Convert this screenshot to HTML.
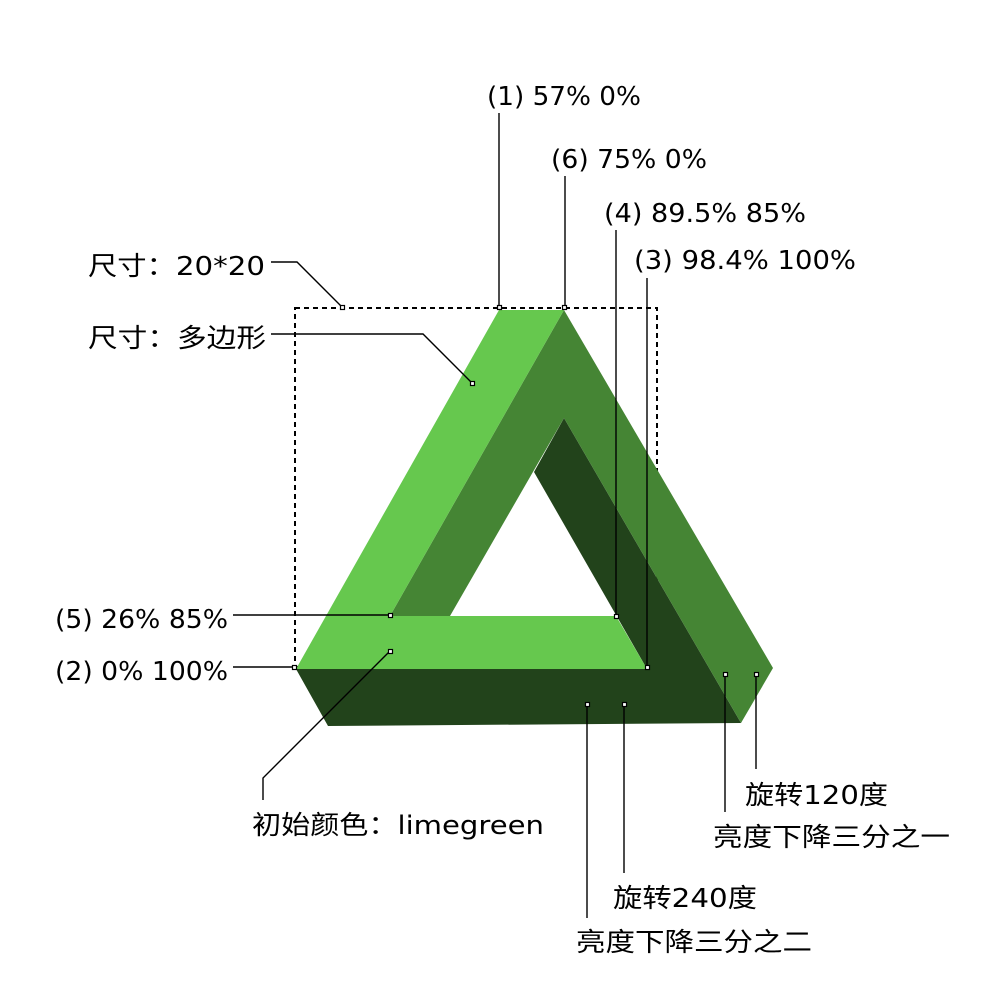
<!DOCTYPE html>
<html><head><meta charset="utf-8"><style>html,body{margin:0;padding:0;background:#fff}svg{display:block}</style></head>
<body>
<svg width="1000" height="1002" viewBox="0 0 1000 1002" xmlns="http://www.w3.org/2000/svg">
<rect x="295" y="308" width="362" height="359" fill="none" stroke="#000" stroke-width="2" stroke-dasharray="5,4"/>
<polygon points="296,669 647,669 534,472 564,418 741,723 328,726" fill="#22431b"/>
<polygon points="564,310 773,668 741,723 564,418 450,616 390,616" fill="#458534"/>
<polygon points="499,310 564,310 390,616 616,616 647,669 296,669" fill="#66c84e"/>
<g fill="none" stroke="#000" stroke-width="1.4">
<polyline points="271,262 297,262 342,307"/>
<polyline points="271,334 423,334 472,383"/>
<line x1="499" y1="113" x2="499" y2="307"/>
<line x1="565" y1="176" x2="565" y2="307"/>
<line x1="616" y1="230" x2="616" y2="616"/>
<line x1="647" y1="278" x2="647" y2="667"/>
<line x1="233" y1="615" x2="390" y2="615"/>
<line x1="233" y1="667" x2="294" y2="667"/>
<polyline points="390,651 263,778 263,800"/>
<line x1="725" y1="674" x2="725" y2="812"/>
<line x1="756" y1="674" x2="756" y2="769"/>
<line x1="587" y1="704" x2="587" y2="918"/>
<line x1="624" y1="704" x2="624" y2="873"/>
</g>
<g fill="#fff" stroke="#000" stroke-width="1.2">
<rect x="340.5" y="305.5" width="4" height="4"/>
<rect x="470.5" y="381.5" width="4" height="4"/>
<rect x="497.5" y="305.5" width="4" height="4"/>
<rect x="562.5" y="305.5" width="4" height="4"/>
<rect x="614.5" y="614.5" width="4" height="4"/>
<rect x="645.5" y="665.5" width="4" height="4"/>
<rect x="388.5" y="613.5" width="4" height="4"/>
<rect x="292.5" y="665.5" width="4" height="4"/>
<rect x="388.5" y="649.5" width="4" height="4"/>
<rect x="723.5" y="672.5" width="4" height="4"/>
<rect x="754.5" y="672.5" width="4" height="4"/>
<rect x="585.5" y="702.5" width="4" height="4"/>
<rect x="622.5" y="702.5" width="4" height="4"/>
</g>
<g font-family="DejaVu Sans, Noto Sans CJK SC, sans-serif" font-size="26" fill="#000">
<text x="487" y="105" textLength="154" lengthAdjust="spacingAndGlyphs">(1) 57% 0%</text>
<text x="551" y="168" textLength="156" lengthAdjust="spacingAndGlyphs">(6) 75% 0%</text>
<text x="604" y="222" textLength="202" lengthAdjust="spacingAndGlyphs">(4) 89.5% 85%</text>
<text x="634" y="269" textLength="222" lengthAdjust="spacingAndGlyphs">(3) 98.4% 100%</text>
<text x="88" y="275" textLength="177" lengthAdjust="spacingAndGlyphs">尺寸：20*20</text>
<text x="88" y="347" textLength="178" lengthAdjust="spacingAndGlyphs">尺寸：多边形</text>
<text x="55" y="628" textLength="173" lengthAdjust="spacingAndGlyphs">(5) 26% 85%</text>
<text x="55" y="680" textLength="173" lengthAdjust="spacingAndGlyphs">(2) 0% 100%</text>
<text x="252" y="834" textLength="292" lengthAdjust="spacingAndGlyphs">初始颜色：limegreen</text>
<text x="745" y="804" textLength="143" lengthAdjust="spacingAndGlyphs">旋转120度</text>
<text x="713" y="846" textLength="237" lengthAdjust="spacingAndGlyphs">亮度下降三分之一</text>
<text x="613" y="907" textLength="144" lengthAdjust="spacingAndGlyphs">旋转240度</text>
<text x="576" y="951" textLength="236" lengthAdjust="spacingAndGlyphs">亮度下降三分之二</text>
</g>
</svg>
</body></html>
